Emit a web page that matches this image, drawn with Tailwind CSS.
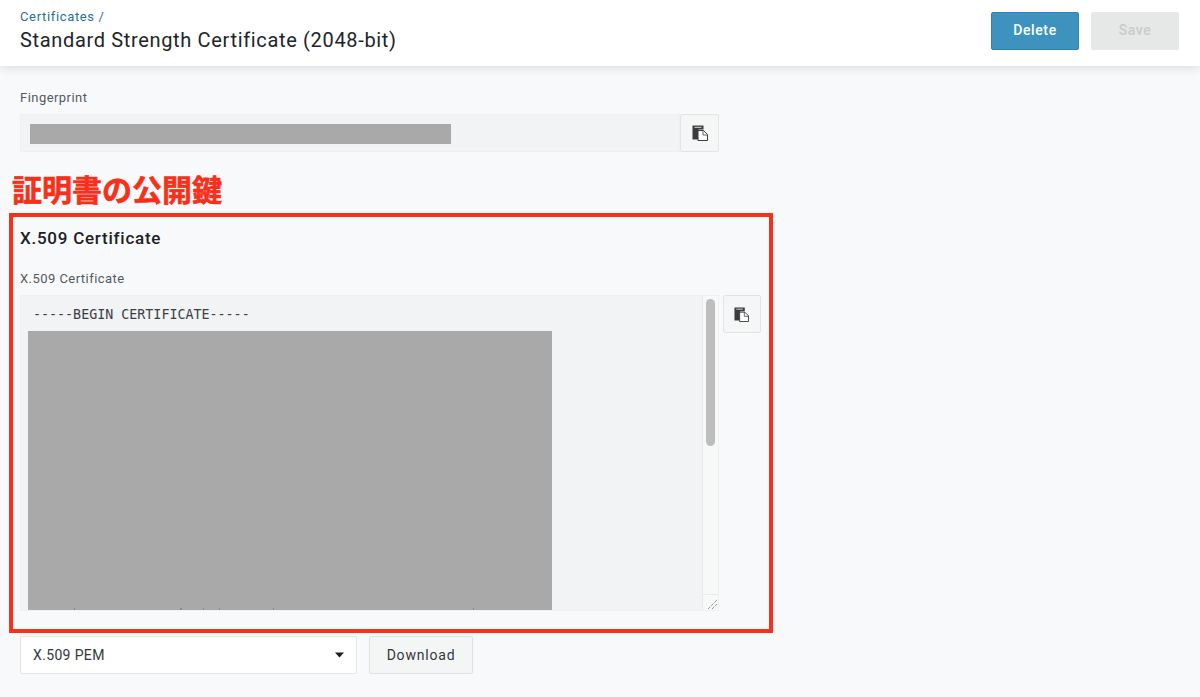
<!DOCTYPE html>
<html lang="en">

<head>
    <meta charset="UTF-8">
    <title>Standard Strength Certificate (2048-bit)</title>
    <script src="https://cdn.jsdelivr.net/npm/@tailwindcss/browser@4"></script>
</head>

<body class="bg-[#f8f9fb] font-['Roboto',sans-serif] text-[#212529] h-[697px] overflow-hidden relative">

    <!-- header -->
    <header class="h-[66px] bg-white shadow-[0_2px_10px_rgba(0,0,0,0.12)] flex justify-between pl-5 pr-[21px] relative">
        <div class="pt-[9px]">
            <div class="text-[13px] leading-[15px] tracking-[0.65px] text-[#1f6f9f]">Certificates /</div>
            <h1 class="text-[20px] leading-[26px] mt-[3px] tracking-[0.66px] text-[#212529]">Standard Strength Certificate (2048-bit)</h1>
        </div>
        <div class="flex gap-[12px] pt-3">
            <button class="w-[88px] h-[38px] pb-[2px] rounded-[2px] bg-[#3d92be] border border-[#2a85b5] text-white text-[14px] font-medium tracking-[0.6px]">Delete</button>
            <button class="w-[88px] h-[38px] pb-[2px] rounded-[2px] bg-[#e6e7e7] text-[#c9cbcb] text-[14px] font-medium tracking-[0.6px]">Save</button>
        </div>
    </header>

    <main class="pl-5 w-[761px]">
        <div class="pt-[24px] text-[13px] leading-[15px] tracking-[0.45px] text-[#54595e]">Fingerprint</div>
        <div class="flex mt-[9px] h-[38px] w-[699px]">
            <div class="flex-1 bg-[#f1f3f5] border border-[#eef0f2] relative">
                <div class="absolute left-[9px] top-[9px] w-[421px] h-[20px] bg-[#a9a9a9]"></div>
            </div>
            <button class="w-[39px] bg-[#f5f6f6] border border-[#e2e4e5] rounded-[2px] flex items-center justify-center">
                <svg width="16" height="16" viewBox="0 0 16 16">
                    <path d="M0.500 0.500h11v4h-5v10h-6z" fill="#3a3d40"/>
                    <path d="M2.500 1.800h7v1h-7z" fill="#d8d9da"/>
                    <path d="M6 5.500h5.500l4 4v6h-9.500z" fill="#fff" stroke="#3a3d40"/>
                    <path d="M11 5.500v4.500h4.500" fill="none" stroke="#3a3d40" stroke-width="0.8"/>
                </svg>
            </button>
        </div>

        <h2 class="mt-[76px] text-[17px] leading-[20px] font-medium tracking-[0.75px] text-[#1d2125]">X.509 Certificate</h2>

        <div class="mt-[23px] text-[13px] leading-[15px] tracking-[0.45px] text-[#54595e]">X.509 Certificate</div>

        <div class="flex mt-[9px]">
            <div class="w-[699px] h-[316px] bg-[#f1f3f5] border border-[#eef0f2] relative overflow-hidden">
                <pre class="pl-3 pt-[11px] font-['DejaVu_Sans_Mono',monospace] text-[13.33px] leading-[15px] text-[#3c4043]">-----BEGIN CERTIFICATE-----</pre>
                <div class="absolute left-[7px] top-[35px] w-[524px] h-[279px] bg-[#a9a9a9]"></div>
                <!-- bits of the next text line showing under the grey block -->
                <svg class="absolute left-0 bottom-0" width="560" height="2" fill="#8a8a8a">
                    <rect x="53" y="0" width="1" height="2"/>
                    <rect x="159" y="0" width="2" height="2"/>
                    <rect x="182" y="0" width="1" height="2"/>
                    <rect x="198" y="0" width="1" height="2"/>
                    <rect x="252" y="0" width="1" height="2"/>
                    <rect x="452" y="0" width="1" height="2"/>
                </svg>
                <!-- scrollbar -->
                <div class="absolute right-0 top-0 bottom-0 w-[16px] bg-[#f7f8f8] border-l border-[#e8e9ea] p-[3px]">
                    <div class="w-[9px] h-[147px] rounded-full bg-[#bdbdbd]"></div>
                </div>
                <!-- resize grip -->
                <div class="absolute right-0 bottom-0 w-[16px] h-[16px] bg-[#f7f8f8] border-l border-t border-[#e8e9ea]">
                    <svg width="15" height="15" viewBox="0 0 15 15" fill="none" stroke="#666" stroke-width="1" stroke-dasharray="1 1">
                        <path d="M5 14 14 5"/>
                        <path d="M9 14 14 9"/>
                    </svg>
                </div>
            </div>
            <button class="w-[38px] h-[38px] ml-[3.500px] bg-[#f5f6f6] border border-[#e2e4e5] rounded-[2px] flex items-center justify-center">
                <svg width="15" height="15" viewBox="0 0 16 16">
                    <path d="M0.500 0.500h11v4h-5v10h-6z" fill="#3a3d40"/>
                    <path d="M2.500 1.800h7v1h-7z" fill="#d8d9da"/>
                    <path d="M6 5.500h5.500l4 4v6h-9.500z" fill="#fff" stroke="#3a3d40"/>
                    <path d="M11 5.500v4.500h4.500" fill="none" stroke="#3a3d40" stroke-width="0.8"/>
                </svg>
            </button>
        </div>

        <div class="flex mt-[25px] gap-[12px]">
            <div class="w-[337px] h-[38px] bg-white border border-[#e3e5e6] rounded-[2px] flex items-center justify-between pl-3 pr-[12px] text-[14px] tracking-[0.35px] text-[#33383c]">
                <span>X.509 PEM</span>
                <svg width="9" height="6" viewBox="0 0 9 6"><path d="M0 0.500h9l-4.500 5z" fill="#1c1f22"/></svg>
            </div>
            <button class="w-[104px] h-[38px] bg-[#f4f5f5] border border-[#dfe1e2] rounded-[2px] text-[14px] tracking-[0.8px] text-[#33383c]">Download</button>
        </div>
    </main>

    <!-- annotation over the screenshot -->
    <div class="absolute left-[12px] top-[171px] text-[30px] leading-[34px] font-bold font-['Noto_Sans_CJK_JP',sans-serif] text-[#f5311c] [-webkit-text-stroke:0.6px_#f5311c]">証明書の公開鍵</div>
    <div class="absolute left-[9px] top-[213px] w-[764px] h-[420px] border-[4px] border-[#f5311c]"></div>

</body>

</html>
